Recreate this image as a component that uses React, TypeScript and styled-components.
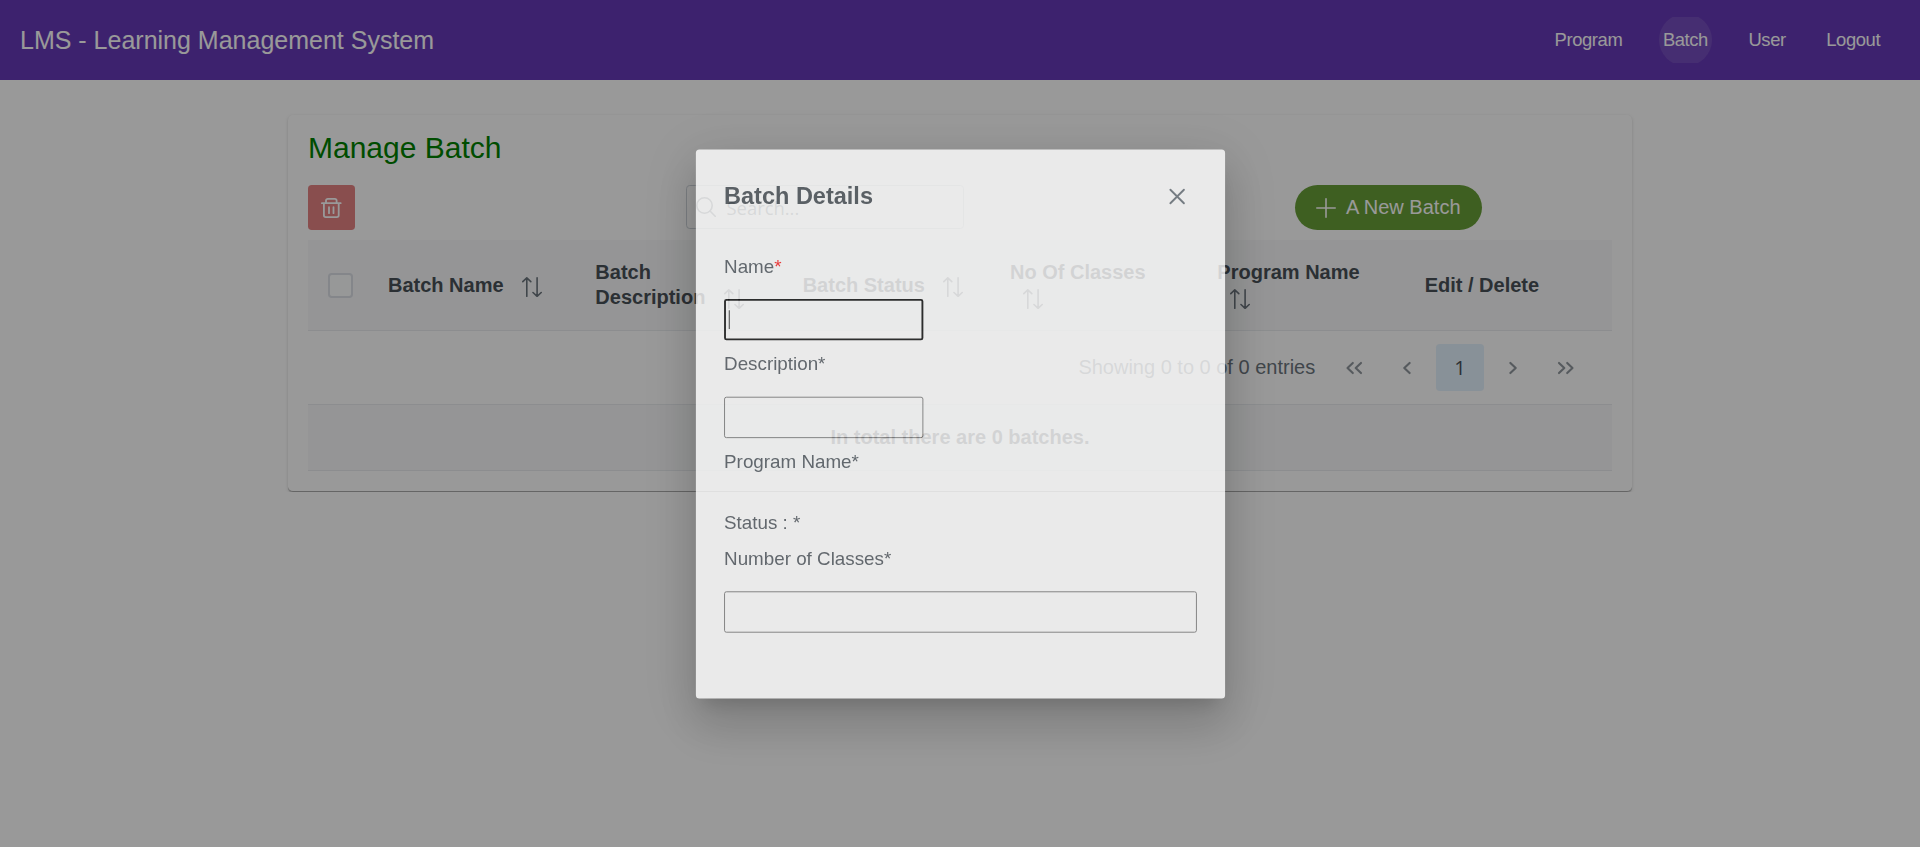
import React from 'react';
import styled, { createGlobalStyle, css } from 'styled-components';

const GlobalStyle = createGlobalStyle`
  *, *::before, *::after { box-sizing: border-box; }
  body {
    margin: 0;
    background: #fff;
    color: #495057;
    font: 20px/1.25 "Liberation Sans", Arial, sans-serif;
    overflow: hidden;
  }
  svg { display: block; fill: none; stroke: currentColor; stroke-linecap: round; stroke-linejoin: round; }
`;

const Toolbar = styled.header`
  display: flex;
  align-items: center;
  justify-content: space-between;
  height: 80px;
  padding: 0 19.6px 0 20px;
  background: #673ab7;
  color: #fff;
`;

const Brand = styled.span`
  font-size: 25px;
  line-height: 40px;
`;

const Nav = styled.nav`
  display: flex;
`;

const NavLink = styled.a<{ $active?: boolean }>`
  position: relative;
  display: flex;
  align-items: center;
  justify-content: center;
  height: 46px;
  margin: 0 16.7px;
  padding: 0 3.6px 2px;
  overflow: hidden;
  font-size: 18.4px;
  letter-spacing: -0.4px;
  ${(p) =>
    p.$active &&
    css`
      &::before {
        content: '';
        position: absolute;
        left: 0;
        right: 0;
        top: 50%;
        aspect-ratio: 1;
        transform: translateY(-50%);
        border-radius: 50%;
        background: rgba(255, 255, 255, 0.1);
      }
    `}
`;

const Card = styled.main`
  width: 1344px;
  height: 377px;
  margin: 35px auto 0;
  padding: 13px 20px 20px;
  border-bottom: 1px solid #a8a8a8;
  border-radius: 5px;
  background: #fff;
  box-shadow: 0 1px 1px 0 rgba(0, 0, 0, 0.14), 0 1px 3.75px 0 rgba(0, 0, 0, 0.12);
`;

const CardTitle = styled.h1`
  margin: 0 0 17px;
  font-size: 30px;
  font-weight: 400;
  line-height: 40px;
  color: green;
`;

const Actions = styled.div`
  display: flex;
  justify-content: space-between;
  height: 45px;
  margin-bottom: 10px;
  padding-right: 130px;
`;

const DeleteButton = styled.button`
  display: grid;
  place-items: center;
  width: 47px;
  padding: 0;
  border: 0;
  border-radius: 3.75px;
  background: #e58282;
  color: #fff;
`;

const SearchBox = styled.div`
  display: flex;
  align-items: center;
  gap: 11px;
  width: 278px;
  height: 44px;
  margin-right: 1px;
  padding-left: 9px;
  border: 1.25px solid #ced4da;
  border-radius: 3.75px;
  color: #6c757d;
  font: 18.4px "Open Sans", "Noto Sans", sans-serif;
`;

const NewButton = styled.button`
  display: flex;
  align-items: center;
  gap: 10px;
  width: 187px;
  padding: 0 0 0 21px;
  border: 0;
  border-radius: 23px;
  background: #689f38;
  color: #fff;
  font: 20px "Liberation Sans", Arial, sans-serif;
`;

const ButtonLabel = styled.span`
  padding-bottom: 1px;
`;

const HeadRow = styled.div`
  display: grid;
  grid-template-columns: 60px repeat(6, 1fr);
  align-items: center;
  height: 91px;
  border-bottom: 1px solid #e9ecef;
  background: #f8f9fa;
`;

const HeadCell = styled.div`
  padding: 0 20px;
  font-weight: 700;
  line-height: 25px;
`;

const Checkbox = styled.span`
  display: block;
  width: 25px;
  height: 25px;
  border: 2px solid #dcdfe6;
  border-radius: 3.75px;
  background: #fcfdfd;
`;

const SortMark = styled.span`
  display: inline-block;
  margin-left: 13px;
  vertical-align: -5px;
  color: #6c757d;
  line-height: 0;
`;

const Pager = styled.div`
  display: flex;
  align-items: center;
  justify-content: flex-end;
  gap: 5.7px;
  height: 74px;
  padding: 0 22.9px;
  border-bottom: 1px solid #e9ecef;
  color: #6c757d;
`;

const PagerText = styled.span`
  margin-right: 10px;
`;

const PageButton = styled.span<{ $current?: boolean }>`
  display: grid;
  place-items: center;
  width: 47.1px;
  height: 47.1px;
  border-radius: 3.75px;
  ${(p) =>
    p.$current
      ? css`
          background: #e3f2fd;
          color: #495057;
          font-family: "Open Sans", sans-serif;
        `
      : css`
          opacity: 0.75;
        `}
`;

const TableFooter = styled.div`
  display: flex;
  align-items: center;
  justify-content: center;
  height: 66px;
  border-bottom: 1px solid #e9ecef;
  background: #f8f9fa;
  font-weight: 700;
`;

const Mask = styled.div`
  position: fixed;
  inset: 0;
  display: flex;
  align-items: center;
  justify-content: center;
  background: rgba(0, 0, 0, 0.4);
`;

const Dialog = styled.section`
  width: 562.5px;
  height: 584px;
  border-radius: 3.75px;
  background: #fff;
  opacity: 0.79;
  transform: scale(0.94);
  box-shadow: 0 13.75px 18.75px -8.75px rgba(0, 0, 0, 0.2), 0 30px 47.5px 3.75px rgba(0, 0, 0, 0.14),
    0 11.25px 57.5px 10px rgba(0, 0, 0, 0.12);
`;

const DialogHeader = styled.div`
  display: flex;
  align-items: center;
  justify-content: space-between;
  height: 100px;
  padding: 0 31px 0 30px;
`;

const DialogTitle = styled.h2`
  margin: 0;
  font-size: 25px;
`;

const CloseButton = styled.span`
  display: grid;
  place-items: center;
  width: 40px;
  height: 40px;
  color: #6c757d;
`;

const DialogBody = styled.div`
  padding: 8.5px 30px 0;
`;

const Label = styled.div<{ $gap?: number }>`
  height: 30px;
  line-height: 30px;
  margin-bottom: ${(p) => p.$gap ?? 20.5}px;
  color: #545b62;
`;

const Required = styled.span`
  color: #f22;
`;

const TextField = styled.div<{ $focused?: boolean; $wide?: boolean }>`
  display: flex;
  align-items: center;
  width: ${(p) => (p.$wide ? '100%' : '212px')};
  height: 44px;
  margin-bottom: 9.5px;
  padding-left: 3px;
  border: ${(p) => (p.$focused ? '2.2px solid #101010' : '1.25px solid #767676')};
  border-radius: 2.5px;
`;

const Caret = styled.i`
  width: 1.25px;
  height: 20px;
  background: #222;
`;

const SortIcon = () => (
  <SortMark>
    <svg width="20" height="20" viewBox="0 0 20 20" strokeWidth="1.6">
      <path d="M4.8 19.3V.8M.8 4.6 4.8.8l4 3.8M15.1.8v18.4M11 15.5l4.1 3.8 4.1-3.8" />
    </svg>
  </SortMark>
);

const chevrons = {
  first: 'M7.8 1.9 2.5 7l5.3 5.1M16 1.9 10.7 7l5.3 5.1',
  prev: 'M11.6 1.9 6.3 7l5.3 5.1',
  next: 'M6.4 1.9 11.7 7l-5.3 5.1',
  last: 'M2 1.9 7.3 7 2 12.1M10.2 1.9 15.5 7l-5.3 5.1',
};

const Chevron = ({ kind }: { kind: keyof typeof chevrons }) => (
  <svg width="18" height="14" viewBox="0 0 18 14" strokeWidth="2.1">
    <path d={chevrons[kind]} />
  </svg>
);

const columns = ['Batch Name', 'Batch Description', 'Batch Status', 'No Of Classes', 'Program Name'];

export default function App() {
  return (
    <>
      <GlobalStyle />
      <Toolbar>
        <Brand>LMS - Learning Management System</Brand>
        <Nav>
          <NavLink>Program</NavLink>
          <NavLink $active>Batch</NavLink>
          <NavLink>User</NavLink>
          <NavLink>Logout</NavLink>
        </Nav>
      </Toolbar>
      <Card>
        <CardTitle>Manage Batch</CardTitle>
        <Actions>
          <DeleteButton>
            <svg width="21" height="20" viewBox="0 0 21 20" strokeWidth="1.8">
              <path d="M.9 5.2h18.8M5 5V2.6C5 1.6 5.8.9 6.8.9h7c1 0 1.8.7 1.8 1.7V5M2.9 5.2v12.1c0 1.1.8 1.8 1.9 1.8h11c1.1 0 1.9-.7 1.9-1.8V5.2M8 9.2v6M12.5 9.2v6" />
            </svg>
          </DeleteButton>
          <SearchBox>
            <svg width="20" height="20" viewBox="0 0 20 20" strokeWidth="1.6">
              <circle cx="8.5" cy="8.5" r="7.7" />
              <path d="m14 14 5.2 5.2" />
            </svg>
            Search...
          </SearchBox>
          <NewButton>
            <svg width="20" height="20" viewBox="0 0 20 20" strokeWidth="1.6">
              <path d="M10 .8v18.4M.8 10h18.4" />
            </svg>
            <ButtonLabel>A New Batch</ButtonLabel>
          </NewButton>
        </Actions>
        <HeadRow>
          <HeadCell>
            <Checkbox />
          </HeadCell>
          {columns.map((name) => (
            <HeadCell key={name}>
              {name} <SortIcon />
            </HeadCell>
          ))}
          <HeadCell>Edit / Delete</HeadCell>
        </HeadRow>
        <Pager>
          <PagerText>Showing 0 to 0 of 0 entries</PagerText>
          <PageButton><Chevron kind="first" /></PageButton>
          <PageButton><Chevron kind="prev" /></PageButton>
          <PageButton $current>1</PageButton>
          <PageButton><Chevron kind="next" /></PageButton>
          <PageButton><Chevron kind="last" /></PageButton>
        </Pager>
        <TableFooter>In total there are 0 batches.</TableFooter>
      </Card>
      <Mask>
        <Dialog>
          <DialogHeader>
            <DialogTitle>Batch Details</DialogTitle>
            <CloseButton>
              <svg width="18" height="18" viewBox="0 0 18 18" strokeWidth="2">
                <path d="m1.8 1.8 14.4 14.4M16.2 1.8 1.8 16.2" />
              </svg>
            </CloseButton>
          </DialogHeader>
          <DialogBody>
            <Label>
              Name<Required>*</Required>
            </Label>
            <TextField $focused>
              <Caret />
            </TextField>
            <Label>Description*</Label>
            <TextField />
            <Label $gap={35.2}>Program Name*</Label>
            <Label $gap={8}>Status : *</Label>
            <Label>Number of Classes*</Label>
            <TextField $wide />
          </DialogBody>
        </Dialog>
      </Mask>
    </>
  );
}
